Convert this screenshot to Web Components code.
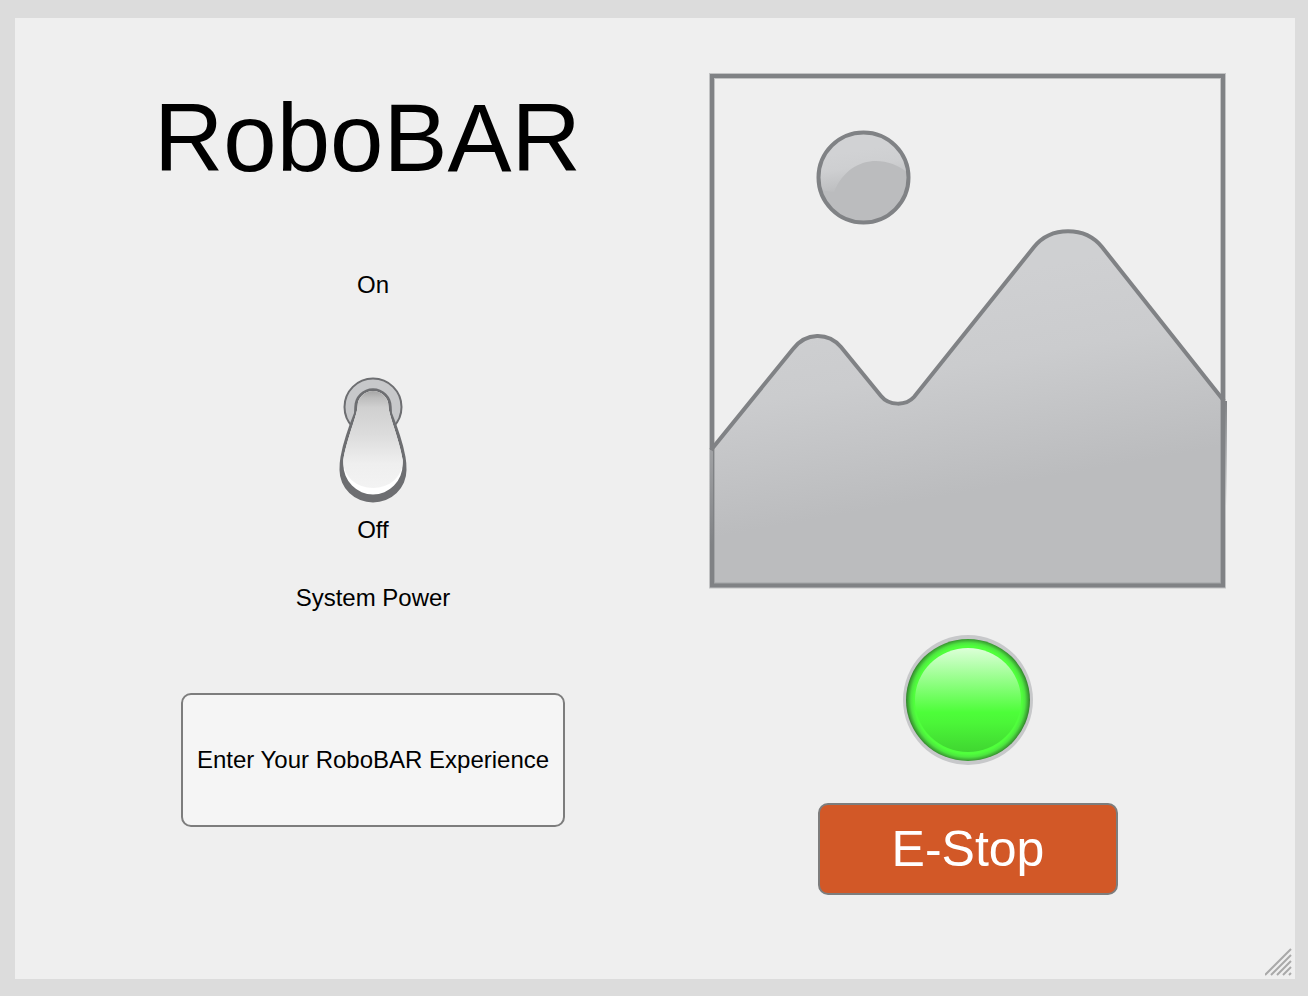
<!DOCTYPE html>
<html lang="en">
<head>
<meta charset="utf-8">
<meta name="viewport" content="width=device-width, initial-scale=1">
<title>RoboBAR</title>
<style>
  body { margin: 0; background: #dcdcdc; color: #000; font-family: "Liberation Sans", Arial, sans-serif; }
</style>
</head>
<body>
<robo-panel>
  <robo-title slot="controls">RoboBAR</robo-title>
  <toggle-switch slot="controls" on="On" off="Off">System Power</toggle-switch>
  <push-button slot="controls" class="enter">Enter Your RoboBAR Experience</push-button>
  <picture-placeholder slot="status"></picture-placeholder>
  <status-lamp slot="status"></status-lamp>
  <push-button slot="status" kind="stop">E-Stop</push-button>
</robo-panel>
<script>
function define(name, html) {
  const template = document.createElement('template');
  template.innerHTML = html;
  customElements.define(name, class extends HTMLElement {
    constructor() {
      super();
      this.attachShadow({ mode: 'open' }).append(template.content.cloneNode(true));
    }
    connectedCallback() {
      this.shadowRoot.querySelectorAll('[data-text]').forEach(node => {
        node.textContent = this.getAttribute(node.dataset.text);
      });
    }
  });
}

define('robo-panel', `
  <style>
    :host { display: flex; box-sizing: border-box; min-height: 100vh; padding: 18px 13px 17px 15px; }
    main { position: relative; flex: 1; display: grid; grid-template-columns: 580fr 518fr; align-items: start; gap: 46px; padding: 54px 68px; background: #efefef; }
    section { display: flex; flex-direction: column; align-items: center; min-width: 0; }
    .controls { gap: 81px; }
    .controls ::slotted(robo-title) { margin-bottom: -14px; }
    .status { gap: 38px; }
    .status ::slotted(status-lamp) { margin-top: 8px; }
    .grip { position: absolute; right: 3px; bottom: 3px; width: 27px; height: 28px; }
  </style>
  <main>
    <section class="controls"><slot name="controls"></slot></section>
    <section class="status"><slot name="status"></slot></section>
    <svg class="grip" viewBox="1265 948 27 28" aria-hidden="true" fill="none" stroke="#a9a9a9" stroke-width="2">
      <path d="M1265 975L1291 949M1271 975L1291 955M1277 975L1291 961M1283 975L1291 967M1289 975L1291 973"/>
    </svg>
  </main>`);

define('robo-title', `
  <style>
    :host { display: block; align-self: stretch; padding-left: 71px; }
    h1 { margin: 0; font-size: 96px; line-height: 132px; font-weight: 400; }
  </style>
  <h1><slot></slot></h1>`);

define('toggle-switch', `
  <style>
    :host { display: flex; flex-direction: column; align-items: center; font-size: 24px; line-height: 28px; }
    .lever { position: relative; margin: 78px 0 13px; width: 68px; height: 126px; }
    svg { display: block; width: 100%; height: 100%; }
    input { position: absolute; inset: 0; width: 100%; height: 100%; margin: 0; appearance: none; cursor: pointer; }
    input:checked + svg { transform: rotate(180deg); }
    label { margin-top: 40px; }
  </style>
  <span data-text="on"></span>
  <div class="lever">
    <input id="power" type="checkbox" role="switch">
    <svg viewBox="339 377 68 126" aria-hidden="true">
      <defs><linearGradient id="k" gradientUnits="userSpaceOnUse" x1="0" y1="391" x2="0" y2="488">
        <stop offset="0" stop-color="#a5a5a5"/><stop offset=".07" stop-color="#bdbdbd"/><stop offset=".17" stop-color="#d0d0d0"/><stop offset=".45" stop-color="#dcdcdc"/><stop offset=".75" stop-color="#efefef"/><stop offset="1" stop-color="#f3f3f3"/>
      </linearGradient></defs>
      <circle cx="373" cy="407" r="28.5" fill="#c7c8ca" stroke="#6d6e71" stroke-width="2"/>
      <path fill="#6d6e71" d="M354.3 407A18.7 18.7 0 0 1 391.7 407L392 413C398 428 403 443 405.5 457Q406.6 463 406.5 470A33.5 32.5 0 0 1 339.500 470Q339.400 463 340.500 457C343 443 348 428 354 413Z"/>
      <path fill="#fff" d="M357.500 406.500A15.500 15.500 0 0 1 388.500 406.500C388.500 414 399.500 440 402.700 460V464A29.700 30.500 0 0 1 343.300 464V460C346.500 440 357.500 414 357.500 406.500Z"/>
      <path fill="url(#k)" d="M357.500 406.500A15.500 15.500 0 0 1 388.500 406.500C388.500 414 399.500 440 402.700 460V462A29.700 26 0 0 1 343.300 462V460C346.500 440 357.500 414 357.500 406.500Z"/>
    </svg>
  </div>
  <span data-text="off"></span>
  <label for="power"><slot></slot></label>`);

define('push-button', `
  <style>
    :host { display: block; width: 384px; max-width: 100%; }
    :host([kind="stop"]) { width: 300px; }
    button { display: block; box-sizing: border-box; width: 100%; min-height: 134px; padding: 0 8px; border: 2px solid #7d7d7d; border-radius: 10px; background: #f5f5f5; color: #000; font: inherit; font-size: 24px; line-height: 28px; cursor: pointer; }
    :host([kind="stop"]) button { min-height: 92px; background: #d25827; color: #fff; font-size: 50px; line-height: 56px; }
  </style>
  <button type="button"><slot></slot></button>`);

define('status-lamp', `
  <style>
    :host { display: block; width: 130px; height: 130px; }
    svg { display: block; width: 100%; height: 100%; }
  </style>
  <svg viewBox="903 635 130 130" role="img" aria-label="System on">
    <defs>
      <radialGradient id="rim" gradientUnits="userSpaceOnUse" cx="968" cy="700" r="62">
        <stop offset=".87" stop-color="#50ff3c"/><stop offset=".92" stop-color="#4de63f"/><stop offset="1" stop-color="#32802c"/>
      </radialGradient>
      <linearGradient id="glass" x1="0" y1="0" x2="0" y2="1">
        <stop offset="0" stop-color="#dcffd8"/><stop offset=".62" stop-color="#4dfe39"/><stop offset=".72" stop-color="#4bf638"/><stop offset="1" stop-color="#40d631"/>
      </linearGradient>
    </defs>
    <circle cx="968" cy="700" r="65" fill="#c7c8ca"/>
    <ellipse cx="968" cy="700" rx="62" ry="61" fill="url(#rim)"/>
    <ellipse cx="968" cy="700" rx="53" ry="52" fill="url(#glass)"/>
  </svg>`);

define('picture-placeholder', `
  <style>
    :host { display: block; width: 100%; }
    svg { display: block; width: 100%; height: auto; }
  </style>
  <svg viewBox="709 72 518 517" role="img" aria-label="Image placeholder">
    <defs>
      <linearGradient id="hill" gradientUnits="userSpaceOnUse" x1="930" y1="286" x2="967" y2="492">
        <stop offset="0" stop-color="#cfd0d2"/><stop offset=".4" stop-color="#cbccce"/><stop offset="1" stop-color="#bbbcbe"/>
      </linearGradient>
      <linearGradient id="shine" gradientUnits="userSpaceOnUse" x1="860" y1="150" x2="866" y2="190">
        <stop offset="0" stop-color="#d1d2d4"/><stop offset=".4" stop-color="#cecfd1"/><stop offset="1" stop-color="#bbbcbe"/>
      </linearGradient>
      <linearGradient id="edge" gradientUnits="userSpaceOnUse" x1="0" y1="401" x2="0" y2="506">
        <stop offset="0" stop-color="#808285"/><stop offset="1" stop-color="#808285" stop-opacity="0"/>
      </linearGradient>
      <linearGradient id="fade" gradientUnits="userSpaceOnUse" x1="0" y1="450" x2="0" y2="545">
        <stop offset="0" stop-color="#c7c8ca" stop-opacity=".45"/><stop offset="1" stop-color="#c7c8ca" stop-opacity="0"/>
      </linearGradient>
    </defs>
    <path fill="url(#hill)" d="M711 450L793 349C806 332 828 332 841 347L881 396C889 406 906 406 914 397L1034 247C1051 226 1085 226 1102 247L1224 401V586H711Z"/>
    <rect x="712" y="76" width="511" height="509.500" fill="none" stroke="#808285" stroke-opacity=".4" stroke-width="6"/>
    <rect x="712" y="76" width="511" height="509.500" fill="none" stroke="#808285" stroke-width="4"/>
    <rect x="709" y="450" width="4" height="95" fill="url(#fade)"/>
    <rect x="1225" y="401" width="2" height="105" fill="url(#edge)"/>
    <path fill="none" stroke="#808285" stroke-width="4" d="M711 450L793 349C806 332 828 332 841 347L881 396C889 406 906 406 914 397L1034 247C1051 226 1085 226 1102 247L1224 401"/>
    <circle cx="863.5" cy="177.500" r="45" fill="#bbbcbe"/>
    <path fill="url(#shine)" d="M820 190A45 45 0 1 1 908 173C884 153 848 157 834 192Z"/>
    <circle cx="863.5" cy="177.500" r="45" fill="none" stroke="#808285" stroke-width="4"/>
  </svg>`);
</script>
</body>
</html>
